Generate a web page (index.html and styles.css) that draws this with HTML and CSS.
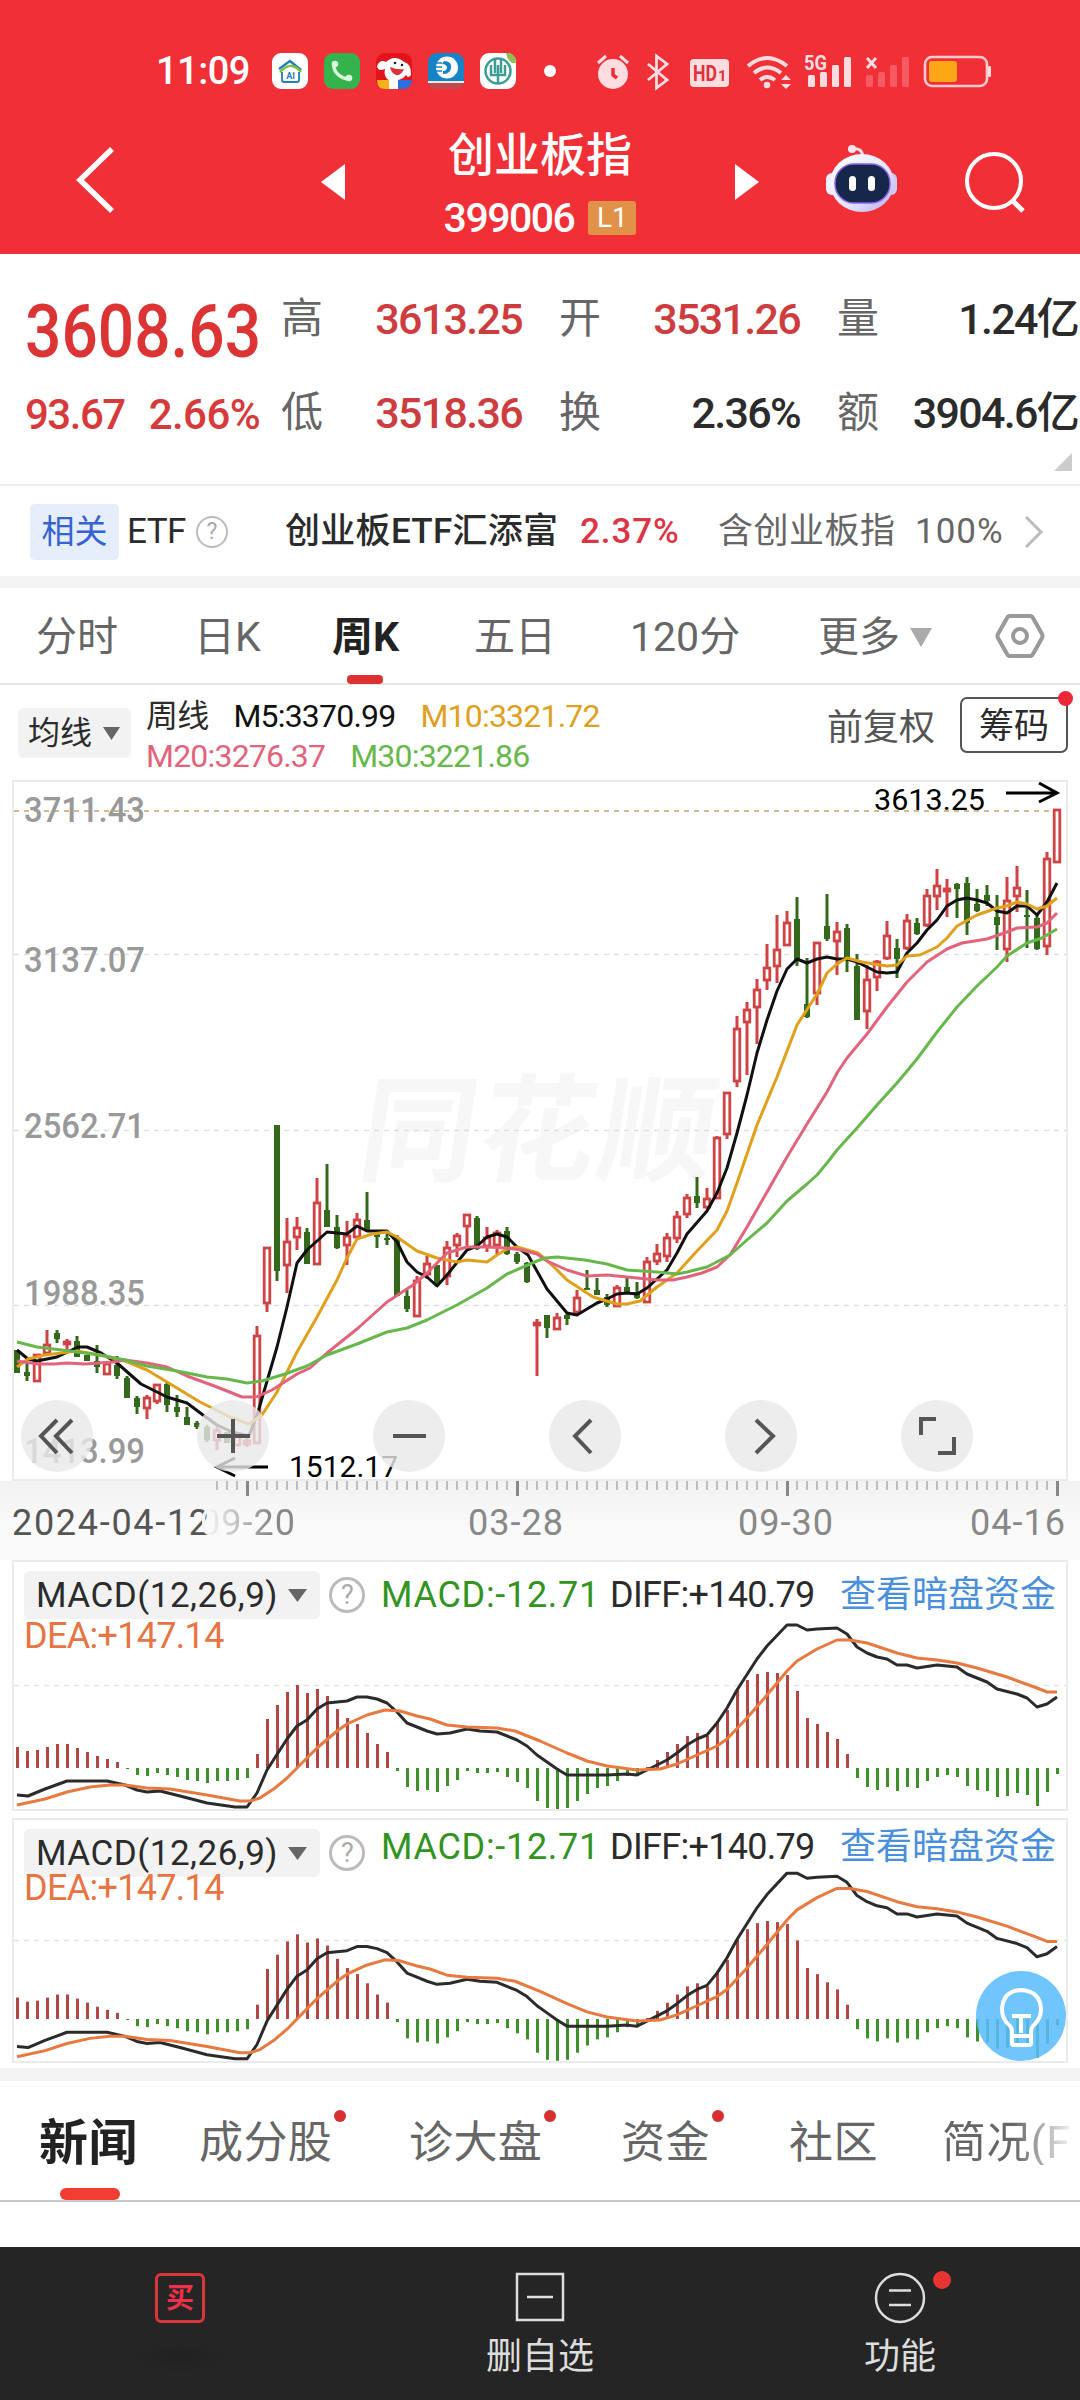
FILE: index.html
```html
<!DOCTYPE html>
<html lang="zh-CN">
<head>
    <meta charset="UTF-8">
    <meta name="viewport" content="width=device-width, initial-scale=1.0">
    <title>创业板指 399006</title>
    <link rel="stylesheet" href="styles.css">
</head>
<body>
    <header class="header">
        <div class="status-bar">
            <span class="clock">11:09</span>
            <div class="app-icons">
                <svg width="36" height="36" viewBox="0 0 36 36">
                    <rect width="36" height="36" rx="9" fill="#fff"/>
                    <path d="M7 16 L18 8 L29 17" fill="none" stroke="#1f7fb8" stroke-width="2.5"/>
                    <path d="M8 19 Q15 12 20 13 T29 19" fill="none" stroke="#7cc142" stroke-width="2.5"/>
                    <path d="M10 19 V27 Q10 29 12 29 H25 Q27 29 27 27 V19" fill="none" stroke="#1f7fb8" stroke-width="1.8"/>
                    <text x="18.5" y="26" font-size="9" font-weight="700" text-anchor="middle" fill="#1f7fb8">AI</text>
                </svg>
                <svg width="36" height="36" viewBox="0 0 36 36">
                    <rect width="36" height="36" rx="9" fill="#34b24c"/>
                    <path d="M10 10 Q9 17 14 21.500 T26 26" fill="none" stroke="#d8f7dc" stroke-width="3.500"/>
                    <circle cx="11" cy="11" r="3.300" fill="#d8f7dc"/>
                    <circle cx="25" cy="25" r="3.300" fill="#d8f7dc"/>
                </svg>
                <svg width="36" height="36" viewBox="0 0 36 36">
                    <rect width="36" height="36" rx="9" fill="#e3131b"/>
                    <path d="M1 13 Q4 6 10 9 Q19 1 28 9 Q35 10 35 22 Q32 26 30 22 Q26 28 14 28 Q7 24 9 16 Q2 19 1 13Z" fill="#fff"/>
                    <circle cx="19" cy="10" r="1.300" fill="#222"/>
                    <circle cx="26" cy="12" r="1.300" fill="#222"/>
                    <path d="M14 14 Q21 17 28 16 Q25 23 20 22 Q15 20 14 14Z" fill="#d8343a"/>
                    <path d="M1 27 H13 V36 H9 Q1 36 1 27Z" fill="#f6b21d"/>
                    <path d="M13 27 H22 V36 H13Z" fill="#fff"/>
                    <path d="M22 27 H36 Q35 36 27 36 H22Z" fill="#2e6fe0"/>
                </svg>
                <svg width="36" height="36" viewBox="0 0 36 36">
                    <rect width="36" height="36" rx="9" fill="#1583c5"/>
                    <path d="M1 30 H35 Q33 36 27 36 H9 Q3 36 1 30Z" fill="#c5484c"/>
                    <rect x="0" y="28" width="36" height="2" fill="#dceffa"/>
                    <circle cx="19" cy="14.500" r="11" fill="#fff"/>
                    <path d="M16 8 Q24 8 23 15 Q22 21 15 21 V18 Q19 18 19 14 Q18 11 14 11" fill="#1583c5"/>
                    <path d="M7 10 H14 M7 14 H14 M7 18 H14" stroke="#1583c5" stroke-width="1.500"/>
                </svg>
                <svg width="36" height="36" viewBox="0 0 36 36">
                    <rect width="36" height="36" rx="9" fill="#fff"/>
                    <circle cx="18" cy="18" r="12.500" fill="none" stroke="#3f9c94" stroke-width="2.500"/>
                    <path d="M18 12 V31 M15 5 V20 M21 5 V20 M11 12 V22 H25 V12" fill="none" stroke="#3f9c94" stroke-width="2.500"/>
                    <path d="M26 0 H29 Q36 2 36 10 H32 Q27 7 26 0Z" fill="#8cc152"/>
                </svg>
            </div>
            <span class="more-dot"></span>
            <svg class="system-icons" width="400" height="40" viewBox="594 50 400 40" fill="#ffdcdf">
                <circle cx="613" cy="73" r="15"/>
                <path d="M598 62 L606 55 M620 55 L628 62" stroke="#ffdcdf" stroke-width="3"/>
                <path d="M613 67 V74 L617 77" fill="none" stroke="#f22f38" stroke-width="3.500"/>
                <path d="M648 63 L667 79 L656.500 87 V55 L667 63 L648 79" fill="none" stroke="#ffdcdf" stroke-width="2.800"/>
                <rect x="690" y="58" width="39" height="28" rx="4"/>
                <text x="693" y="80" font-size="22" font-weight="700" fill="#e0303a" textLength="24" lengthAdjust="spacingAndGlyphs">HD</text>
                <text x="718" y="80" font-size="15" font-weight="700" fill="#e0303a">1</text>
                <g fill="none" stroke="#ffdcdf" stroke-width="4">
                    <path d="M748 65 Q767 49 787 65"/>
                    <path d="M754 72 Q767 61 781 72"/>
                    <path d="M760 79 Q767 73 775 79"/>
                </g>
                <circle cx="767" cy="84" r="3.300"/>
                <path d="M781 79 L786 74 L791 79Z M781 83 H791 L786 88Z"/>
                <text x="804" y="69" font-size="20" font-weight="700" textLength="23" lengthAdjust="spacingAndGlyphs">5G</text>
                <rect x="808" y="74" width="7" height="12" rx="1.500"/>
                <rect x="820" y="71" width="7" height="15" rx="1.500"/>
                <rect x="832" y="64" width="7" height="22" rx="1.500"/>
                <rect x="844" y="56" width="7" height="30" rx="1.500"/>
                <path d="M867 57 L876 67 M876 57 L867 67" stroke="#ffdcdf" stroke-width="3"/>
                <g fill="#f75a62">
                    <rect x="866" y="74" width="7" height="12" rx="1.500"/>
                    <rect x="878" y="71" width="7" height="15" rx="1.500"/>
                    <rect x="890" y="64" width="7" height="22" rx="1.500"/>
                    <rect x="902" y="56" width="7" height="30" rx="1.500"/>
                </g>
                <rect x="925" y="56" width="62" height="29" rx="7" fill="none" stroke="#ffc9cd" stroke-width="2.600"/>
                <rect x="929" y="60" width="28" height="21" rx="3" fill="#fda717"/>
                <rect x="988" y="65" width="3" height="11" rx="1"/>
            </svg>
        </div>
        <div class="title-bar">
            <svg class="back" width="40" height="68" viewBox="0 0 40 68"><path d="M37 3 L5 34 L37 65" fill="none" stroke="#fff" stroke-width="5.500"/></svg>
            <svg width="24" height="36" viewBox="0 0 24 36"><path d="M24 0 V36 L0 18Z" fill="#fff"/></svg>
            <div class="title">
                <h1>创业板指</h1>
                <div class="code"><span>399006</span><span class="badge">L1</span></div>
            </div>
            <svg width="24" height="36" viewBox="0 0 24 36"><path d="M0 0 V36 L24 18Z" fill="#fff"/></svg>
            <svg class="robot" width="74" height="70" viewBox="0 0 74 70">
                <defs>
                    <linearGradient id="shell" x1="0" y1="0" x2="1" y2="1">
                        <stop offset="0" stop-color="#fff"/><stop offset=".6" stop-color="#e3e4fc"/><stop offset="1" stop-color="#b5a8f5"/>
                    </linearGradient>
                </defs>
                <path d="M27 5 Q37 3 38 13" fill="none" stroke="#f3dff0" stroke-width="3"/>
                <circle cx="27" cy="5" r="4" fill="#fbe6f0"/>
                <rect x="1" y="29" width="12" height="22" rx="6" fill="#eef0ff"/>
                <rect x="60" y="29" width="12" height="22" rx="6" fill="#cfc9f8"/>
                <ellipse cx="37" cy="39" rx="32" ry="29" fill="url(#shell)"/>
                <rect x="10" y="20" width="55" height="39" rx="19" fill="#17264b" stroke="#8a63e8" stroke-width="1.500"/>
                <rect x="24" y="32" width="7" height="15" rx="3.500" fill="#fff"/>
                <rect x="43" y="32" width="7" height="15" rx="3.500" fill="#fff"/>
            </svg>
            <svg class="search" width="62" height="64" viewBox="0 0 62 64" fill="none" stroke="#fff">
                <circle cx="30" cy="30" r="27" stroke-width="4"/>
                <path d="M48 49 L59 60" stroke-width="5"/>
            </svg>
        </div>
    </header>

    <section class="quote">
        <div class="last"><span class="num">3608.63</span></div>
        <span class="label">高</span><span class="value up">3613.25</span>
        <span class="label">开</span><span class="value up">3531.26</span>
        <span class="label">量</span><span class="value">1.24亿</span>
        <div class="change"><span>93.67</span><span>2.66%</span></div>
        <span class="label">低</span><span class="value up">3518.36</span>
        <span class="label">换</span><span class="value">2.36%</span>
        <span class="label">额</span><span class="value">3904.6亿</span>
        <i class="corner"></i>
    </section>

    <section class="etf">
        <span class="tag">相关</span>
        <span class="etf-word">ETF</span>
        <span class="help small">?</span>
        <b class="etf-name">创业板ETF汇添富</b>
        <span class="etf-rate">2.37%</span>
        <span class="grey">含创业板指</span>
        <span class="grey percent">100%</span>
        <svg width="20" height="34" viewBox="0 0 20 34"><path d="M2 2 L17 17 L2 32" fill="none" stroke="#bbb" stroke-width="3"/></svg>
    </section>

    <nav class="periods">
        <span>分时</span>
        <span>日K</span>
        <span class="active">周K</span>
        <span>五日</span>
        <span class="minutes">120分</span>
        <span class="more">更多<svg width="22" height="19" viewBox="0 0 22 19"><path d="M0 0 H22 L11 19Z" fill="#aaa"/></svg></span>
        <svg width="50" height="46" viewBox="0 0 50 46" fill="none" stroke="#999" stroke-width="4">
            <path d="M15 3 H35 Q37 3 38 5 L47 21 Q48 23 47 25 L38 41 Q37 43 35 43 H15 Q13 43 12 41 L3 25 Q2 23 3 21 L12 5 Q13 3 15 3Z"/>
            <circle cx="25" cy="23" r="7"/>
        </svg>
    </nav>

    <section class="averages">
        <button class="select">均线<svg width="17" height="13" viewBox="0 0 17 13"><path d="M0 0 H17 L8.500 13Z" fill="#666"/></svg></button>
        <div class="ma-list">
            <div><span>周线</span><span class="ma5">M5:3370.99</span><span class="ma10">M10:3321.72</span></div>
            <div><span class="ma20">M20:3276.37</span><span class="ma30">M30:3221.86</span></div>
        </div>
        <span class="adjust">前复权</span>
        <button class="chips">筹码</button>
    </section>

    <section class="kline">
        <svg id="kline" width="1080" height="702" viewBox="0 0 1080 702">
            <text class="watermark" x="355" y="392" transform="skewX(-9) translate(62 0)" textLength="355">同花顺</text>
            <rect x="13" y="1" width="1054" height="699" fill="none" stroke="#ebebeb" stroke-width="2"/>
            <g class="grid">
                <path d="M14 174.500 H1066 M14 350.500 H1066 M14 525.500 H1066"/>
                <path class="top" d="M14 31 H1052"/>
            </g>
            <g class="scale">
                <text x="24" y="42" textLength="121" lengthAdjust="spacingAndGlyphs">3711.43</text>
                <text x="24" y="192" textLength="121" lengthAdjust="spacingAndGlyphs">3137.07</text>
                <text x="24" y="358" textLength="121" lengthAdjust="spacingAndGlyphs">2562.71</text>
                <text x="24" y="525" textLength="121" lengthAdjust="spacingAndGlyphs">1988.35</text>
                <text x="24" y="683" textLength="121" lengthAdjust="spacingAndGlyphs">1413.99</text>
            </g>
            <g id="candles"></g>
            <g class="lines">
                <polyline stroke="#111" points="17,570 28,579 37,581 57,577 78,567 87,567 101,573 117,583 141,604 167,617 187,623 203,635 217,645 232,652 249,656 258,632 277,567 287,527 297,483 307,470 327,452 347,454 357,446 367,451 387,451 397,462 407,482 417,492 427,497 437,506 447,495 467,470 477,466 487,457 497,454 507,457 517,467 528,475 547,509 567,533 577,535 597,523 607,519 617,514 627,513 637,514 647,508 667,490 677,473 687,454 707,431 717,413 727,388 737,353 747,315 757,273 767,240 777,211 787,189 797,179 807,183 817,179 827,177 837,179 847,179 857,182 867,187 877,192 887,193 897,192 907,173 917,163 927,150 937,140 947,126 957,120 967,118 977,120 987,123 997,131 1007,133 1017,126 1027,126 1037,135 1047,122 1057,103"/>
                <polyline stroke="#e0a01c" points="17,587 28,579 45,575 77,571 100,575 125,581 147,590 167,602 200,622 230,637 249,644 262,635 277,612 297,572 317,537 337,500 347,478 357,459 372,454 387,452 397,457 417,471 437,478 457,482 467,480 487,482 497,475 507,469 517,467 538,473 552,485 567,500 593,517 617,524 627,524 640,521 657,507 677,493 697,471 717,450 727,431 737,403 757,345 777,297 797,245 817,214 827,193 837,184 847,178 862,182 887,186 897,185 907,176 920,175 937,167 947,158 957,146 977,135 997,128 1007,126 1017,122 1027,124 1037,129 1047,126 1057,118"/>
                <polyline stroke="#e2637c" points="17,581 38,584 55,584 67,583 85,584 112,582 125,580 147,583 167,587 187,596 217,607 242,617 256,617 272,610 297,594 310,588 327,573 357,549 387,522 413,505 427,493 447,473 467,467 487,467 507,468 522,470 537,474 547,481 567,490 587,496 607,495 637,498 657,500 673,500 687,497 702,493 717,487 730,475 747,447 767,412 787,377 807,344 827,312 837,293 847,278 867,254 887,227 907,202 927,182 947,169 962,163 987,159 1007,152 1017,148 1037,147 1047,143 1057,133"/>
                <polyline stroke="#67b84c" points="17,562 37,567 70,571 100,575 125,580 147,586 177,591 207,597 227,599 247,603 262,601 285,594 307,586 327,575 357,564 387,552 407,548 427,540 457,525 487,508 507,494 537,481 545,478 557,477 585,480 607,484 627,490 657,492 677,494 687,492 707,487 730,475 747,460 767,443 787,421 807,404 817,395 827,383 837,370 857,348 877,325 897,303 917,279 937,252 957,227 977,206 997,187 1007,176 1027,163 1042,158 1057,149"/>
            </g>
            <g class="extreme">
                <text x="874" y="30" textLength="111" lengthAdjust="spacingAndGlyphs">3613.25</text>
                <path d="M1006 13 H1057 M1039 3 L1057 13 L1039 22"/>
                <text x="289" y="697" textLength="109" lengthAdjust="spacingAndGlyphs">1512.17</text>
                <path d="M268 687 H217 M235 678 L217 687 L235 696"/>
            </g>
        </svg>
        <div class="tools">
            <button><svg viewBox="0 0 72 72"><path d="M36 20 L20 36 L36 53 M51 20 L35 36 L51 53"/></svg></button>
            <button><svg viewBox="0 0 72 72"><path d="M20 36 H53 M36 19 V53"/></svg></button>
            <button><svg viewBox="0 0 72 72"><path d="M20 36 H53"/></svg></button>
            <button><svg viewBox="0 0 72 72"><path d="M42 20 L26 36 L42 53"/></svg></button>
            <button><svg viewBox="0 0 72 72"><path d="M31 20 L48 36 L31 53"/></svg></button>
            <button><svg viewBox="0 0 72 72"><path d="M20 35 V19 H35 M53 37 V53 H37"/></svg></button>
        </div>
    </section>

    <section class="axis">
        <svg id="ticks" width="1080" height="18" viewBox="0 0 1080 18"></svg>
        <div class="dates">
            <span class="start">2024-04-12</span>
            <span class="second">09-20</span>
            <span>03-28</span>
            <span>09-30</span>
            <span class="end">04-16</span>
        </div>
    </section>

    <section class="macd" data-zero="208" data-scale="1" data-grid="125">
        <svg class="plot" width="1056" height="251" viewBox="12 0 1056 251"></svg>
        <div class="macd-head">
            <button class="select">MACD(12,26,9)<svg width="19" height="13" viewBox="0 0 19 13"><path d="M0 0 H19 L9.500 13Z" fill="#666"/></svg></button>
            <span class="help">?</span>
            <span class="hist">MACD:-12.71</span>
            <span class="diff">DIFF:+140.79</span>
            <a class="link">查看暗盘资金</a>
        </div>
        <span class="dea">DEA:+147.14</span>
    </section>

    <section class="macd second" data-zero="201" data-scale="1.020" data-grid="122">
        <svg class="plot" width="1056" height="246" viewBox="12 0 1056 246"></svg>
        <div class="macd-head">
            <button class="select">MACD(12,26,9)<svg width="19" height="13" viewBox="0 0 19 13"><path d="M0 0 H19 L9.500 13Z" fill="#666"/></svg></button>
            <span class="help">?</span>
            <span class="hist">MACD:-12.71</span>
            <span class="diff">DIFF:+140.79</span>
            <a class="link">查看暗盘资金</a>
        </div>
        <span class="dea">DEA:+147.14</span>
        <button class="bulb">
            <svg width="90" height="90" viewBox="0 0 90 90" fill="none" stroke="#fff" stroke-width="4">
                <path d="M36 72 V61 Q36 56 32 53 Q26 47 26 38 Q27 20 45 19 Q64 20 65 38 Q65 47 59 53 Q55 56 55 61 V72 Q55 74 53 74 H38 Q36 74 36 72Z"/>
                <path d="M36 45 H55 M45 45 V62 M37 65 H54"/>
            </svg>
        </button>
    </section>

    <nav class="news-tabs">
        <span class="active">新闻</span>
        <span class="has-dot">成分股</span>
        <span class="has-dot">诊大盘</span>
        <span class="has-dot">资金</span>
        <span>社区</span>
        <span class="faded">简况(F</span>
    </nav>

    <footer class="bottom-bar">
        <div class="item">
            <span class="buy">买</span>
            <span class="smudge"></span>
        </div>
        <div class="item">
            <svg width="50" height="50" viewBox="0 0 50 50" fill="none" stroke="#ddd" stroke-width="2.500"><path d="M2 2 H48 V48 H2Z M12 25 H38"/></svg>
            <span>删自选</span>
        </div>
        <div class="item func">
            <svg width="52" height="52" viewBox="0 0 52 52" fill="none" stroke="#ddd" stroke-width="2.500"><circle cx="26" cy="26" r="24"/><path d="M15 18.500 H37 M15 33 H37"/></svg>
            <span>功能</span>
        </div>
    </footer>

    <script src="chart.js"></script>
</body>
</html>
```

FILE: styles.css
```css
* {
    box-sizing: border-box;
}
body {
    margin: 0;
    width: 1080px;
    height: 2400px;
    overflow: hidden;
    background: #fff;
    color: #2b2b2b;
    font-family: Roboto, "Noto Sans CJK SC", sans-serif;
    line-height: 1;
}
svg {
    display: block;
    flex: none;
}
svg text {
    font-family: Roboto, "Noto Sans CJK SC", sans-serif;
}
span, b, h1 {
    white-space: nowrap;
}
button {
    border: none;
    padding: 0;
    font-family: inherit;
    color: inherit;
    line-height: 1;
    white-space: nowrap;
}

/* header */
.header {
    height: 254px;
    background: #f12f37;
    color: #fff;
}
.status-bar {
    display: flex;
    align-items: center;
    height: 110px;
    padding: 32px 0 0 156px;
}
.clock {
    width: 116px;
    font-size: 38px;
    font-weight: 500;
    letter-spacing: -.5px;
}
.app-icons {
    display: flex;
    gap: 16px;
}
.more-dot {
    width: 12px;
    height: 12px;
    margin: 0 38px 0 28px;
    border-radius: 50%;
    background: #fff;
}
.title-bar {
    display: flex;
    align-items: center;
    height: 144px;
    padding-left: 75px;
}
.back {
    margin: 0 206px 4px 0;
}
.title {
    width: 390px;
    padding-top: 6px;
    text-align: center;
}
.title h1 {
    margin: 0 0 20px;
    font-size: 46px;
    font-weight: 500;
}
.code {
    display: flex;
    justify-content: center;
    align-items: center;
    gap: 14px;
    font-size: 41px;
    font-weight: 500;
    letter-spacing: -1.500px;
}
.badge {
    width: 48px;
    height: 34px;
    border-radius: 3px;
    background: #e29148;
    font-size: 28px;
    font-weight: 400;
    line-height: 34px;
    letter-spacing: 0;
}
.robot {
    margin: 0 65px 6px 66px;
}
.search {
    margin-top: 2px;
}

/* quote */
.quote {
    position: relative;
    display: grid;
    grid-template-columns: 256px 40px 201px 80px 198px 79px 199px;
    grid-template-rows: 94px 94px;
    align-items: center;
    height: 232px;
    padding: 17px 0 0 25px;
    border-bottom: 2px solid #eee;
}
.last {
    padding-top: 28px;
    color: #dc3434;
    font-size: 74px;
    font-weight: 500;
}
.num {
    display: inline-block;
    transform: scaleX(.865);
    transform-origin: left;
}
.change {
    display: flex;
    justify-content: space-between;
    width: 235px;
    padding-top: 5px;
    color: #d63a3a;
    font-size: 42px;
    font-weight: 500;
    letter-spacing: -1.500px;
}
.change span:last-child {
    letter-spacing: -.6px;
    margin-left: -6px;
}
.label {
    padding-top: 2px;
    color: #666;
    font-size: 42px;
}
.value + .label {
    padding-left: 37px;
}
.value {
    padding-top: 2px;
    font-size: 43px;
    font-weight: 500;
    letter-spacing: -1.700px;
    text-align: right;
}
.up {
    color: #cd3d3f;
}
.corner {
    position: absolute;
    right: 8px;
    bottom: 13px;
    border-left: 18px solid transparent;
    border-bottom: 18px solid #ccc;
}

/* related etf */
.etf {
    display: grid;
    grid-template-columns: 97px 69px 89px 295px 138px 197px 109px 20px;
    align-items: center;
    height: 102px;
    padding: 1px 0 0 30px;
    border-bottom: 12px solid #f4f4f4;
    font-size: 35px;
}
.tag {
    width: 89px;
    height: 56px;
    border-radius: 5px;
    background: #e6eefb;
    color: #3563d2;
    font-size: 33px;
    line-height: 56px;
    text-align: center;
}
.etf-word {
    letter-spacing: -.5px;
}
.etf-name {
    font-size: 35px;
    font-weight: 500;
    letter-spacing: .3px;
}
.etf-rate {
    color: #dc3546;
    font-weight: 500;
    letter-spacing: .9px;
}
.grey {
    color: #666;
    letter-spacing: .5px;
}
.percent {
    letter-spacing: 1px;
}
.help {
    width: 36px;
    height: 36px;
    border: 3px solid #bbb;
    border-radius: 50%;
    color: #aaa;
    font-size: 27px;
    line-height: 31px;
    text-align: center;
}
.help.small {
    width: 32px;
    height: 32px;
    border-width: 2px;
    font-size: 23px;
    line-height: 28px;
    letter-spacing: 0;
}

/* period tabs */
.periods {
    display: grid;
    grid-template-columns: 158px 138px 142px 156px 188px 177px 50px;
    align-items: center;
    height: 97px;
    padding: 0 0 0 36px;
    border-bottom: 2px solid #e6e6e6;
    color: #666;
    font-size: 41px;
}
.periods span {
    padding-top: 4px;
}
.periods .active {
    position: relative;
    color: #222;
    font-weight: 700;
}
.periods .active::after {
    content: "";
    position: absolute;
    left: 15px;
    bottom: -26px;
    width: 36px;
    height: 9px;
    border-radius: 4px;
    background: #de3232;
}
.more {
    display: flex;
    align-items: center;
    gap: 10px;
}

/* moving averages */
.averages {
    display: flex;
    align-items: flex-start;
    height: 95px;
    padding-left: 18px;
}
.select {
    display: flex;
    align-items: center;
    border-radius: 6px;
    background: #f2f2f2;
}
.averages .select {
    width: 113px;
    height: 50px;
    margin: 23px 15px 0 0;
    padding-left: 10px;
    gap: 11px;
    font-size: 32px;
}
.ma-list {
    width: 681px;
    padding-top: 13px;
    font-size: 32px;
    letter-spacing: -.8px;
}
.ma-list div {
    display: flex;
    gap: 25px;
    height: 41px;
    align-items: center;
}
.ma-list div:first-child {
    height: 36px;
    margin-bottom: 1px;
}
.ma5 { color: #111; }
.ma10 { color: #dfa01e; }
.ma20 { color: #e2637c; }
.ma30 { color: #67b84c; }
.adjust {
    width: 133px;
    padding-top: 25px;
    color: #555;
    font-size: 36px;
}
.chips {
    position: relative;
    width: 108px;
    height: 56px;
    margin-top: 12px;
    padding-top: 2px;
    border: 2px solid #555;
    border-radius: 7px;
    background: #fff;
    font-size: 35px;
}
.chips::after {
    content: "";
    position: absolute;
    right: -7px;
    top: -8px;
    width: 15px;
    height: 15px;
    border-radius: 50%;
    background: #ec2738;
}

/* candles */
.kline {
    position: relative;
    height: 701px;
}
.watermark {
    fill: #f7f7f7;
    font-size: 116px;
    font-weight: 700;
}
.grid path {
    stroke: #dedede;
    stroke-width: 1.500;
    stroke-dasharray: 5 5;
}
.grid .top {
    stroke: #c3a36a;
}
.scale text {
    fill: #999;
    font-size: 35px;
    font-weight: 500;
}
.lines polyline, .plot polyline {
    fill: none;
    stroke-width: 3;
    stroke-linejoin: round;
}
.extreme text {
    font-size: 30px;
}
.extreme path {
    fill: none;
    stroke: #000;
    stroke-width: 3;
}
.tools {
    position: absolute;
    left: 21px;
    top: 620px;
    display: flex;
    gap: 104px;
}
.tools button {
    width: 72px;
    height: 72px;
    border-radius: 50%;
    background: rgba(232, 232, 232, .8);
}
.tools path {
    fill: none;
    stroke: #555;
    stroke-width: 4;
}
.axis {
    height: 79px;
    background: linear-gradient(#f2f2f2, #fafafa 60%);
}
.dates {
    display: grid;
    grid-template-columns: 188px 268px 270px 232px auto;
    padding: 5px 0 0 12px;
    color: #888;
    font-size: 36px;
    line-height: 38px;
    letter-spacing: 1px;
}
.dates .start {
    color: #555;
    letter-spacing: 1.700px;
}
.dates .second {
    background: linear-gradient(90deg, #f5f5f5 3%, #888 26%);
    -webkit-background-clip: text;
    color: transparent;
}

/* macd panels */
.macd {
    position: relative;
    width: 1056px;
    height: 251px;
    margin: 0 12px 7px;
    border: 2px solid #ebebeb;
}
.macd.second {
    height: 245px;
    margin-bottom: 5px;
}
.plot {
    position: absolute;
    left: -2px;
    top: -2px;
}
.macd-head {
    position: relative;
    display: grid;
    grid-template-columns: 305px 52px 229px 230px auto;
    align-items: center;
    height: 48px;
    margin: 9px 0 0 10px;
    font-size: 36px;
    letter-spacing: -.7px;
}
.macd-head .select {
    width: 296px;
    height: 48px;
    padding-left: 12px;
    gap: 10px;
    font-size: 35px;
    letter-spacing: .5px;
}
.hist { color: #329321; letter-spacing: .7px; }
.link { color: #4a8fdc; letter-spacing: 0; }
.dea {
    position: relative;
    display: block;
    padding-left: 10px;
    color: #e77543;
    font-size: 36px;
    line-height: 34px;
    letter-spacing: -.7px;
}
.second .hist, .second .diff, .second .link {
    padding-bottom: 12px;
}
.second .dea {
    margin-top: -6px;
}
.bulb {
    position: absolute;
    right: 0;
    bottom: 0;
    width: 90px;
    height: 90px;
    border-radius: 50%;
    background: rgba(91, 188, 252, .87);
}

/* news tabs */
.news-tabs {
    display: grid;
    grid-template-columns: 160px 210px 212px 168px 153px auto;
    align-items: center;
    height: 134px;
    padding: 5px 0 0 39px;
    border-top: 13px solid #f4f4f4;
    border-bottom: 2px solid #c8c8c8;
    color: #666;
    font-size: 44px;
    letter-spacing: .4px;
}
.news-tabs span {
    position: relative;
    justify-self: start;
}
.news-tabs .active {
    color: #222;
    font-size: 49px;
    font-weight: 700;
}
.news-tabs .active::after {
    content: "";
    position: absolute;
    left: 21px;
    bottom: -32px;
    width: 60px;
    height: 12px;
    border-radius: 6px;
    background: #f43d31;
}
.has-dot::after {
    content: "";
    position: absolute;
    right: -14px;
    top: -11px;
    width: 12px;
    height: 12px;
    border-radius: 50%;
    background: #d83030;
}
.faded {
    background: linear-gradient(90deg, #666 55%, #f2f2f2 100%);
    -webkit-background-clip: text;
    color: transparent;
}

/* bottom bar */
.bottom-bar {
    display: grid;
    grid-template-columns: repeat(3, 360px);
    height: 154px;
    margin-top: 45px;
    padding-top: 25px;
    background: #252525;
    color: #ddd;
    font-size: 36px;
}
.item {
    position: relative;
    display: flex;
    flex-direction: column;
    align-items: center;
    gap: 17px;
}
.buy {
    width: 50px;
    height: 50px;
    margin-top: 1px;
    border: 3px solid #d9363c;
    border-radius: 6px;
    color: #f0304a;
    font-size: 28px;
    font-weight: 700;
    line-height: 46px;
    text-align: center;
}
.smudge {
    width: 104px;
    height: 34px;
    border-radius: 16px;
    background: radial-gradient(#212121, #252525 70%);
}
.func {
    gap: 15px;
}
.func::after {
    content: "";
    position: absolute;
    left: 213px;
    top: -1px;
    width: 18px;
    height: 18px;
    border-radius: 50%;
    background: #e83430;
}
```

FILE: chart.js
```js
// weekly candles: high, body top, body bottom, low, 1 = rising
const candles = [
    [570,570,593,593,0],[583,592,596,601,0],[574,574,602,602,1],[550,564,574,574,1],[550,553,559,563,0],
    [559,561,565,570,1],[556,561,577,577,0],[575,575,581,581,0],[565,581,587,593,0],[583,583,595,595,1],
    [576,585,596,599,0],[596,598,618,618,0],[616,618,627,634,0],[615,617,629,639,1],[604,604,622,624,1],
    [602,604,625,632,0],[615,627,632,637,0],[627,637,645,645,0],[641,643,647,649,0],[645,647,660,662,0],
    [647,650,661,670,1],[652,652,663,663,0],[652,655,666,666,1],[657,660,665,667,1],[546,555,664,664,1],
    [467,467,524,532,1],[345,345,491,501,0],[438,461,486,513,1],[437,447,458,470,1],[448,452,484,484,0],
    [398,422,485,485,1],[384,430,447,447,0],[435,447,468,469,0],[441,455,466,485,1],[433,439,458,458,1],
    [412,440,450,450,0],[452,452,457,468,0],[453,458,460,465,0],[455,457,516,516,0],[510,516,529,532,0],
    [496,500,537,537,1],[476,483,495,499,1],[485,485,505,505,0],[461,467,497,505,1],[453,455,466,477,1],
    [434,434,447,467,1],[436,438,469,470,0],[447,457,467,472,1],[450,452,466,474,1],[447,451,474,475,0],
    [472,474,482,484,0],[482,483,502,503,0],[539,542,546,596,1],[535,535,548,558,0],[533,537,550,550,1],
    [534,535,539,545,0],[510,517,533,534,1],[490,508,510,510,0],[498,510,515,515,0],[514,517,525,527,0],
    [505,507,527,527,1],[498,507,512,512,0],[502,512,518,519,0],[477,481,523,523,1],[464,473,482,485,1],
    [453,457,477,482,1],[431,436,459,463,1],[414,417,435,438,1],[397,416,423,428,0],[408,418,428,429,1],
    [356,357,419,419,1],[312,312,355,359,1],[236,248,302,307,1],[222,229,243,295,1],[199,209,228,264,1],
    [164,187,201,210,1],[135,169,187,203,1],[131,142,166,166,1],[117,139,180,186,0],[178,224,237,238,0],
    [162,162,214,225,1],[114,146,159,161,0],[142,151,162,195,1],[144,148,180,192,0],[174,186,240,240,0],
    [185,199,232,249,1],[180,181,198,211,1],[141,155,179,180,1],[159,168,179,198,0],[134,140,169,170,1],
    [138,143,154,155,0],[109,115,146,147,1],[89,105,117,130,1],[99,108,112,137,1],[103,104,109,138,0],
    [97,103,143,155,0],[109,124,131,132,0],[105,115,121,126,0],[115,137,145,170,0],[97,120,170,182,1],
    [86,107,117,132,1],[110,135,137,168,0],[133,138,169,170,0],[72,78,167,175,1],[29,29,83,83,1]
];

// histogram height above (+) or below (-) the zero line
const bars = [
    21,17,18,21,24,24,20,16,12,9,6,-1,-7,-8,-5,-7,-9,-12,-13,-15,-13,-13,-12,-10,
    14,49,63,76,83,75,79,72,59,50,44,35,24,16,-3,-19,-23,-22,-24,-18,-12,-3,-5,-5,-4,-9,-14,-20,-33,
    -40,-41,-40,-33,-26,-20,-18,-13,-8,-8,1,8,16,24,32,35,32,47,58,78,88,94,96,95,93,77,50,44,36,29,14,
    -10,-19,-22,-19,-23,-19,-20,-13,-9,-7,-9,-18,-22,-23,-29,-28,-25,-27,-38,-24,-6
];

const diff = [[17,27],[28,28],[45,21],[67,13],[107,13],[125,17],[137,22],[147,24],[160,23],[180,28],[207,35],[235,39],[247,39],[257,25],[267,2],[287,-29],[297,-42],[307,-48],[317,-59],[327,-65],[347,-67],[357,-71],[367,-71],[377,-69],[387,-65],[397,-56],[407,-45],[417,-41],[427,-37],[437,-34],[450,-35],[467,-39],[480,-37],[497,-36],[517,-28],[527,-22],[537,-13],[547,-6],[557,1],[567,7],[607,7],[627,6],[637,7],[647,2],[667,-8],[677,-15],[687,-23],[697,-29],[707,-33],[717,-45],[727,-60],[737,-78],[757,-109],[767,-122],[787,-143],[797,-143],[807,-138],[817,-139],[837,-140],[847,-134],[857,-121],[867,-115],[877,-111],[887,-109],[897,-103],[907,-103],[917,-100],[937,-103],[957,-101],[967,-94],[987,-86],[997,-79],[1017,-74],[1027,-70],[1037,-61],[1047,-64],[1057,-71]];
const dea = [[17,37],[45,31],[67,24],[90,19],[110,17],[125,17],[147,20],[170,21],[207,27],[240,33],[250,33],[260,30],[275,20],[287,10],[297,0],[317,-20],[337,-37],[347,-44],[367,-53],[385,-58],[400,-57],[417,-52],[430,-49],[447,-43],[467,-41],[497,-40],[515,-37],[540,-27],[567,-15],[587,-7],[607,-2],[637,2],[660,1],[677,-4],[697,-13],[717,-22],[727,-29],[747,-50],[767,-73],[787,-97],[797,-107],[817,-119],[837,-128],[850,-128],[867,-125],[897,-115],[917,-110],[937,-108],[957,-105],[977,-100],[1007,-91],[1037,-80],[1047,-76],[1057,-76]];

function xAt(i) {
    return 17 + i * 10;
}

let out = "";
candles.forEach(([high, top, bottom, low, up], i) => {
    const x = xAt(i);
    const color = up ? "#cf4345" : "#34681a";
    if (up) {
        out += `<path d="M${x} ${high}V${top}M${x} ${bottom}V${low}" stroke="${color}" stroke-width="3"/>`;
        out += `<rect x="${x - 2.8}" y="${top + 1}" width="5.6" height="${Math.max(bottom - top - 2, 1)}" fill="#fff" stroke="${color}" stroke-width="2.8"/>`;
    } else {
        out += `<path d="M${x} ${high}V${low}" stroke="${color}" stroke-width="3"/>`;
        out += `<rect x="${x - 3}" y="${top}" width="6" height="${Math.max(bottom - top, 2)}" fill="${color}"/>`;
    }
});
document.getElementById("candles").innerHTML = out;

let ticks = "";
for (let i = 20; i < 105; i++) {
    const major = (i - 23) % 27 === 0;
    ticks += `<rect x="${xAt(i) - (major ? 1 : 0.5)}" y="0" width="${major ? 3 : 1}" height="${major ? 15 : 9}" fill="#888"/>`;
}
document.getElementById("ticks").innerHTML = ticks;

document.querySelectorAll(".macd").forEach(panel => {
    const zero = Number(panel.dataset.zero);
    const scale = Number(panel.dataset.scale);
    const points = line => line.map(([x, y]) => x + "," + (zero + y * scale)).join(" ");
    let html = `<path d="M14 ${panel.dataset.grid}.5H1066" stroke="#e4e4e4" stroke-width="1.5" stroke-dasharray="5 5"/>`;
    bars.forEach((v, i) => {
        const h = Math.abs(v) * scale;
        html += `<rect x="${xAt(i) - 1}" y="${v > 0 ? zero - h : zero}" width="3" height="${h}" fill="${v > 0 ? "#b04745" : "#3f8f2c"}"/>`;
    });
    html += `<polyline stroke="#2b2b2b" points="${points(diff)}"/>`;
    html += `<polyline stroke="#e8793f" points="${points(dea)}"/>`;
    panel.querySelector(".plot").innerHTML = html;
});
```
